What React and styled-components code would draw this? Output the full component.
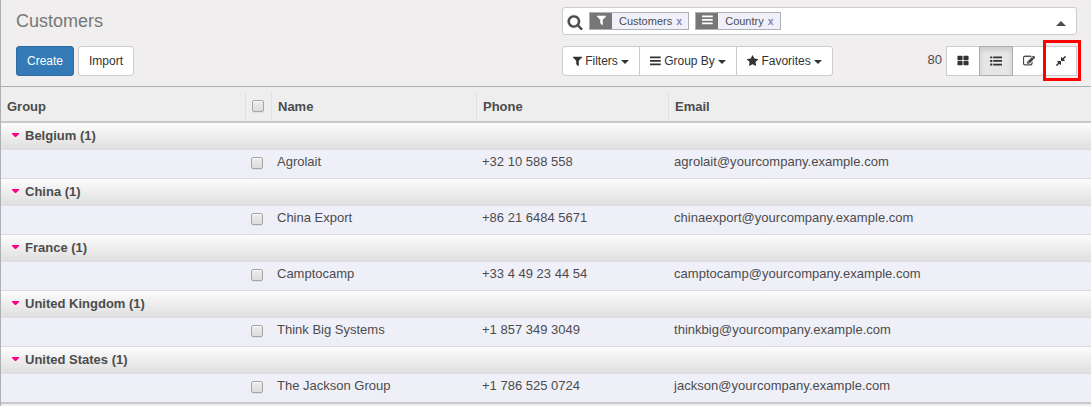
import React from "react";
import styled, { createGlobalStyle, css } from "styled-components";

const GlobalStyle = createGlobalStyle`
  *, *::before, *::after { box-sizing: border-box; }
  html, body { margin: 0; height: 406px; overflow: hidden; }
  body {
    font-family: "Liberation Sans", Arial, sans-serif;
    font-size: 13px;
    color: #4c4c4c;
    background: #eee;
  }
`;

const Page = styled.div`
  width: 1091px;
  height: 406px;
  overflow: hidden;
  border-left: 1px solid #afafb6;
  background: #eee;
`;

const ControlPanel = styled.header`
  display: flex;
  flex-direction: column;
  height: 87px;
  padding: 7px 14px 0 15px;
  background: #f0eeee;
  border-bottom: 1px solid #afafb6;
`;

const PanelRow = styled.div`
  display: flex;
  justify-content: space-between;
  height: ${(p) => p.$height}px;
`;

const Title = styled.h1`
  margin: 0;
  padding-top: 4px;
  font-size: 18px;
  line-height: 21px;
  font-weight: 400;
  color: #777;
`;

const SearchBox = styled.div`
  display: flex;
  align-items: flex-start;
  width: 515px;
  height: 28px;
  padding: 4px 9px 0 5px;
  border: 1px solid #ccc;
  border-radius: 3px;
  background: #fff;
`;

const Facet = styled.div`
  display: flex;
  height: 18px;
  margin-right: 6px;
  border: 1px solid #afafb6;
  background: #f0f0fa;
  font-size: 11px;
  line-height: 16px;
`;

const FacetIcon = styled.span`
  width: 22px;
  padding-top: 1px;
  text-align: center;
  line-height: 0;
  color: #fff;
  background: #777;
`;

const FacetLabel = styled.span`
  padding: 0 4px 0 7px;
`;

const FacetRemove = styled.span`
  width: 12px;
  font-size: 10.5px;
  font-weight: 700;
  color: #8786b7;
`;

const SearchToggle = styled.span`
  margin: 9px 1px 0 auto;
  border: 5px solid transparent;
  border-top: 0;
  border-bottom: 5px solid #4c4c4c;
`;

const buttonBase = css`
  display: flex;
  align-items: center;
  justify-content: center;
  height: 30px;
  margin: 0;
  padding: 0;
  border: 1px solid #ccc;
  font: 12px/18px "Liberation Sans", Arial, sans-serif;
  color: #333;
  background: #fff;
`;

const Button = styled.button`
  ${buttonBase}
  width: ${(p) => p.$width}px;
  border-radius: 3px;
  ${(p) =>
    p.$primary &&
    css`
      color: #fff;
      background: #337ab7;
      border-color: #2e6da4;
    `}
`;

const Actions = styled.div`
  display: flex;
  gap: 4px;
`;

const Tools = styled.div`
  display: flex;
  justify-content: space-between;
  width: 515px;
`;

const ButtonGroup = styled.div`
  display: flex;
`;

const GroupButton = styled.button`
  ${buttonBase}
  width: ${(p) => p.$width}px;
  gap: 3.5px;
  margin-left: -1px;
  &:first-child { margin-left: 0; border-radius: 3px 0 0 3px; }
  &:last-child { border-radius: 0 3px 3px 0; }
  ${(p) =>
    p.$active &&
    css`
      background: #e6e6e6;
      border-color: #adadad;
      box-shadow: inset 0 3px 5px rgba(0, 0, 0, 0.125);
      z-index: 1;
    `}
`;

const Caret = styled.span`
  border: 4px solid transparent;
  border-top-color: #333;
  border-bottom: 0;
  margin-top: 2px;
`;

const Pager = styled.div`
  display: flex;
  position: relative;
`;

const Count = styled.span`
  padding: 6px 5px 0 0;
  line-height: 16px;
`;

const Highlight = styled.span`
  position: absolute;
  top: -6px;
  right: -4px;
  width: 38px;
  height: 41px;
  border: 3px solid #f00;
  z-index: 2;
`;

const Svg = styled.svg`
  display: inline-block;
  flex: none;
  width: ${(p) => p.$width}px;
  height: ${(p) => p.$size}px;
  fill: currentColor;
`;

const SearchIcon = styled(Svg)`
  margin: 2px 6px 0 -1px;
  stroke: currentColor;
  stroke-width: 30;
`;

const columns = "244px 26px 205px 192px 1fr";

const HeadRow = styled.div`
  display: grid;
  grid-template-columns: ${columns};
  height: 36px;
  padding-top: 6px;
  background: #eee;
  border-bottom: 2px solid #c8c8c8;
`;

const HeadCell = styled.div`
  padding: 6px 6px 0;
  border-left: ${(p) => (p.$first ? "0" : "1px solid #dfdfdf")};
  line-height: 16px;
  font-weight: 700;
`;

const GroupRow = styled.div`
  display: flex;
  height: 27px;
  padding: 5px 0 0 11px;
  gap: 6px;
  line-height: 16px;
  font-weight: 700;
  background: linear-gradient(to bottom, #fcfcfc, #dedede);
`;

const GroupArrow = styled.svg`
  flex: none;
  width: 7px;
  height: 4px;
  margin-top: 5px;
  fill: #ff0084;
`;

const RecordRow = styled.div`
  display: grid;
  grid-template-columns: ${columns};
  height: 29px;
  background: linear-gradient(to bottom, #f0f0fa, #eeeef6);
  border-bottom: 1px solid #dbdbdb;
  ${(p) => p.$last && css`
    height: 30px;
    border-bottom: 2px solid #c8c8c8;
  `}
`;

const Cell = styled.div`
  padding: 4px 6px 0;
  line-height: 16px;
`;

const EmailCell = styled(Cell)`
  letter-spacing: 0.03px;
`;

const Checkbox = styled.input`
  appearance: none;
  display: block;
  width: 12px;
  height: 12px;
  margin: ${(p) => (p.$head ? "1px 0 0 0" : "3px 0 0 0")};
  border: 1px solid #a6a6a6;
  border-radius: 2px;
  background: linear-gradient(#ededed, #dcdcdc);
  box-shadow: 0 1px 0 rgba(0, 0, 0, 0.06), inset 0 1px 1px rgba(255, 255, 255, 0.75);
`;

const searchPath =
  "M1216 832q0-185-131.5-316.5t-316.5-131.5-316.5 131.5-131.5 316.5 131.5 316.5 316.5 131.5 316.5-131.5 131.5-316.5zm512 832q0 52-38 90t-90 38q-54 0-90-38l-343-342q-179 124-399 124-143 0-273.5-55.5t-225-150-150-225-55.5-273.5 55.5-273.5 150-225 225-150 273.5-55.5 273.5 55.5 225 150 150 225 55.5 273.5q0 220-124 399l343 343q37 37 37 90z";

/* Each glyph: left edge and width in a 1792-unit em, and its outline. */
const glyphs = {
  filter: {
    x: 224,
    w: 1344,
    d: "M1595 295q17 41-14 70l-493 493v742q0 42-39 59-13 5-25 5-27 0-45-19l-256-256q-19-19-19-45v-486l-493-493q-31-29-14-70 17-39 59-39h1280q42 0 59 39z",
  },
  bars: {
    x: 64,
    w: 1643,
    d: "M64 215h1600v265h-1600zM64 735h1600v265h-1600zM64 1255h1600v265h-1600z",
  },
  star: {
    x: 64,
    w: 1664,
    d: "M1728 647q0 22-26 48l-363 354 86 500q1 7 1 20 0 21-10.5 35.5t-30.5 14.5q-19 0-40-12l-449-236-449 236q-22 12-40 12-21 0-31.5-14.5t-10.5-35.5q0-6 2-20l86-500-364-354q-25-27-25-48 0-37 56-46l502-73 225-455q19-41 49-41t49 41l225 455 502 73q56 9 56 46z",
  },
  kanban: {
    x: 0,
    w: 1792,
    d: "M832 1024v384q0 52-38 90t-90 38h-512q-52 0-90-38t-38-90v-384q0-52 38-90t90-38h512q52 0 90 38t38 90zm0-768v384q0 52-38 90t-90 38h-512q-52 0-90-38t-38-90v-384q0-52 38-90t90-38h512q52 0 90 38t38 90zm896 768v384q0 52-38 90t-90 38h-512q-52 0-90-38t-38-90v-384q0-52 38-90t90-38h512q52 0 90 38t38 90zm0-768v384q0 52-38 90t-90 38h-512q-52 0-90-38t-38-90v-384q0-52 38-90t90-38h512q52 0 90 38t38 90z",
  },
  list: {
    x: 0,
    w: 1792,
    d: "M20 220h320v280h-320zM20 750h320v280h-320zM20 1280h320v280h-320zM480 230h1312v250h-1312zM480 765h1312v250h-1312zM480 1300h1312v250h-1312z",
  },
  edit: {
    x: 0,
    w: 1792,
    stroke: 40,
    d: "M888 1184l116-116-152-152-116 116v56h96v96h56zm440-720q-16-16-33 1l-350 350q-17 17-1 33t33-1l350-350q17-17 1-33zm80 594v190q0 119-84.5 203.5t-203.5 84.5h-832q-119 0-203.5-84.5t-84.5-203.5v-832q0-119 84.5-203.5t203.5-84.5h832q63 0 117 25 15 7 18 23 3 17-9 29l-49 49q-14 14-32 8-23-6-45-6h-832q-66 0-113 47t-47 113v832q0 66 47 113t113 47h832q66 0 113-47t47-113v-126q0-13 9-22l64-64q15-15 35-7t20 29zm-96-738l288 288-672 672h-288v-288zm444 132l-92 92-288-288 92-92q28-28 68-28t68 28l152 152q28 28 28 68t-28 68z",
  },
  compress: {
    x: 0,
    w: 1792,
    d: "M896 960v448q0 26-19 45t-45 19-45-19l-144-144-332 332q-10 10-23 10t-23-10l-114-114q-10-10-10-23t10-23l332-332-144-144q-19-19-19-45t19-45 45-19h448q26 0 45 19t19 45zm755-672q0 13-10 23l-332 332 144 144q19 19 19 45t-19 45-45 19h-448q-26 0-45-19t-19-45v-448q0-26 19-45t45-19 45 19l144 144 332-332q10-10 23-10t23 10l114 114q10 10 10 23z",
  },
};

const Icon = ({ name, size = 12 }) => {
  const g = glyphs[name];
  return (
    <Svg $size={size} $width={(size * g.w) / 1792} viewBox={`${g.x} 0 ${g.w} 1792`}>
      <path d={g.d} stroke={g.stroke ? "currentColor" : "none"} strokeWidth={g.stroke} />
    </Svg>
  );
};

const facets = [
  { icon: "filter", label: "Customers" },
  { icon: "bars", label: "Country" },
];

const menus = [
  { icon: "filter", label: "Filters", width: 78 },
  { icon: "bars", label: "Group By", width: 98 },
  { icon: "star", label: "Favorites", width: 97 },
];

const views = [
  { icon: "kanban", width: 34 },
  { icon: "list", width: 34, active: true },
  { icon: "edit", width: 34 },
  { icon: "compress", width: 32 },
];

const groups = [
  { country: "Belgium", name: "Agrolait", phone: "+32 10 588 558", email: "agrolait@yourcompany.example.com" },
  { country: "China", name: "China Export", phone: "+86 21 6484 5671", email: "chinaexport@yourcompany.example.com" },
  { country: "France", name: "Camptocamp", phone: "+33 4 49 23 44 54", email: "camptocamp@yourcompany.example.com" },
  { country: "United Kingdom", name: "Think Big Systems", phone: "+1 857 349 3049", email: "thinkbig@yourcompany.example.com" },
  { country: "United States", name: "The Jackson Group", phone: "+1 786 525 0724", email: "jackson@yourcompany.example.com" },
];

export default function App() {
  return (
    <Page>
      <GlobalStyle />
      <ControlPanel>
        <PanelRow $height={39}>
          <Title>Customers</Title>
          <SearchBox>
            <SearchIcon $size={16} $width={16} viewBox="0 0 1792 1792">
              <path d={searchPath} />
            </SearchIcon>
            {facets.map((f) => (
              <Facet key={f.label}>
                <FacetIcon>
                  <Icon name={f.icon} />
                </FacetIcon>
                <FacetLabel>{f.label}</FacetLabel>
                <FacetRemove>x</FacetRemove>
              </Facet>
            ))}
            <SearchToggle />
          </SearchBox>
        </PanelRow>
        <PanelRow $height={40}>
          <Actions>
            <Button $primary $width={58}>Create</Button>
            <Button $width={56}>Import</Button>
          </Actions>
          <Tools>
            <ButtonGroup>
              {menus.map((m) => (
                <GroupButton key={m.label} $width={m.width}>
                  <Icon name={m.icon} />
                  {m.label}
                  <Caret />
                </GroupButton>
              ))}
            </ButtonGroup>
            <Pager>
              <Count>80</Count>
              {views.map((v) => (
                <GroupButton key={v.icon} $width={v.width} $active={v.active}>
                  <Icon name={v.icon} />
                </GroupButton>
              ))}
              <Highlight />
            </Pager>
          </Tools>
        </PanelRow>
      </ControlPanel>
      <HeadRow>
        <HeadCell $first>Group</HeadCell>
        <HeadCell>
          <Checkbox type="checkbox" $head />
        </HeadCell>
        <HeadCell>Name</HeadCell>
        <HeadCell>Phone</HeadCell>
        <HeadCell>Email</HeadCell>
      </HeadRow>
      {groups.map((g, i) => (
        <React.Fragment key={g.country}>
          <GroupRow>
            <GroupArrow viewBox="0 0 7 4">
              <path d="M0 0h7v1L4 4H3L0 1z" />
            </GroupArrow>
            {g.country} (1)
          </GroupRow>
          <RecordRow $last={i === groups.length - 1}>
            <Cell />
            <Cell>
              <Checkbox type="checkbox" />
            </Cell>
            <Cell>{g.name}</Cell>
            <Cell>{g.phone}</Cell>
            <EmailCell>{g.email}</EmailCell>
          </RecordRow>
        </React.Fragment>
      ))}
    </Page>
  );
}
